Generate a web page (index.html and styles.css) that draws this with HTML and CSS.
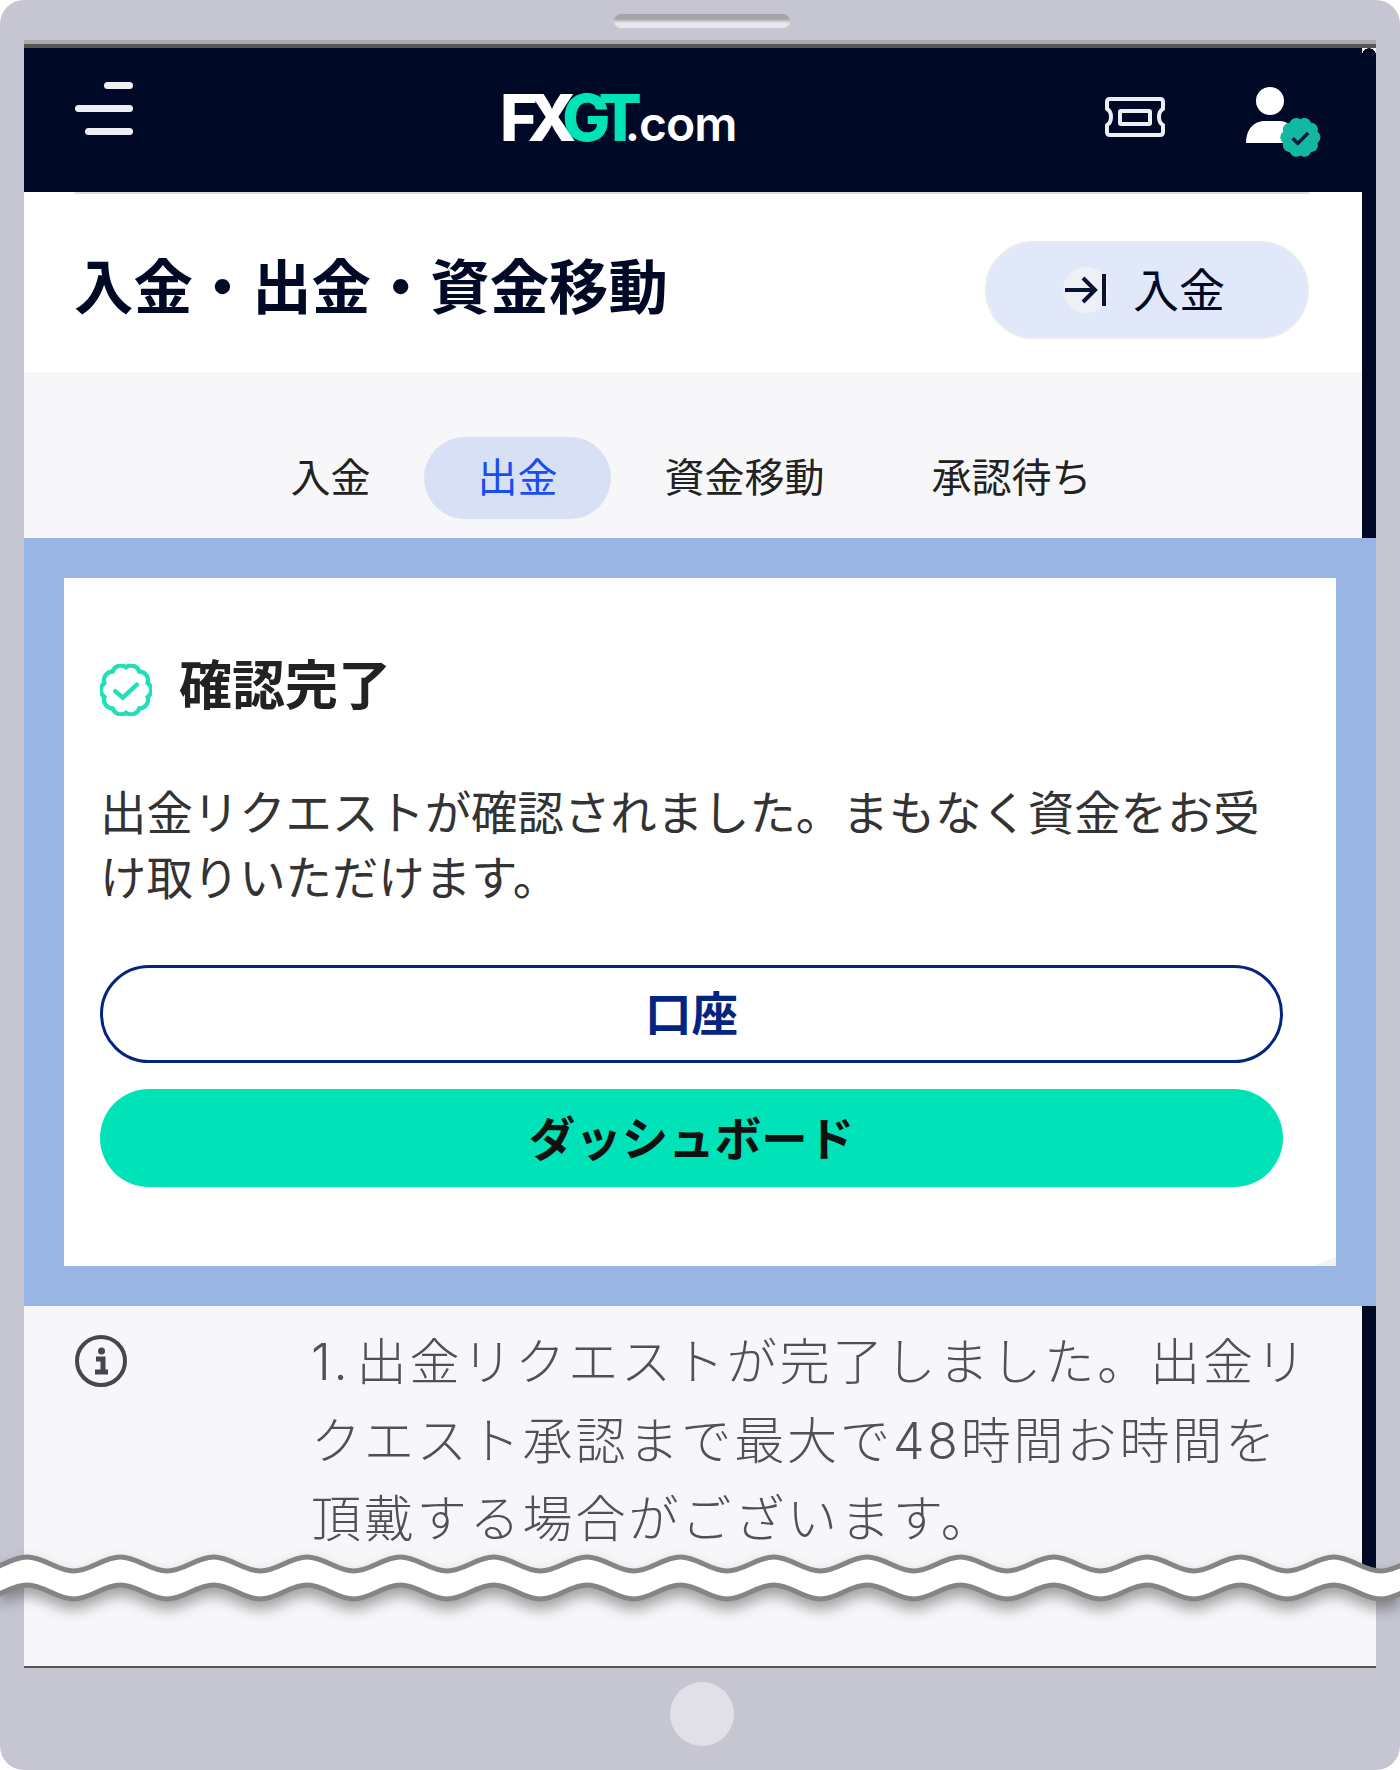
FILE: index.html
```html
<!DOCTYPE html>
<html lang="ja">
<head>
    <meta charset="utf-8">
    <title>入金・出金・資金移動</title>
    <link rel="stylesheet" href="styles.css">
</head>
<body>
    <div class="frame">
        <div class="speaker"></div>
        <div class="screen">
            <header class="topbar">
                <div class="burger"><span class="b1"></span><span class="b2"></span><span class="b3"></span></div>
                <div class="logo"><span class="logo-fx">FX</span><span class="logo-gt">GT</span><span class="logo-com">.com</span></div>
                <svg class="ticket" width="60" height="40" viewBox="0 0 60 40" fill="none" stroke="#eeeef5" stroke-width="4" stroke-linejoin="round">
                    <path d="M5 2H55Q58 2 58 5V12Q54 14 54 20T58 28V35Q58 38 55 38H5Q2 38 2 35V28Q6 26 6 20T2 12V5Q2 2 5 2Z"/>
                    <rect x="15" y="14" width="30" height="13" rx="1"/>
                </svg>
                <svg class="user" width="84" height="82" viewBox="0 0 84 82">
                    <circle cx="25" cy="15" r="14" fill="#fff"/>
                    <path d="M1 57C1 42 10 35 20 35H34C44 35 50 42 50 57Z" fill="#fff"/>
                    <g transform="translate(33 29) scale(.86)" fill="#13b8a4">
                        <path d="M45.97 19.51A8 8 0 0 1 45.97 32.49A8 8 0 0 1 38.34 42.99A8 8 0 0 1 26 47A8 8 0 0 1 13.66 42.99A8 8 0 0 1 6.03 32.49A8 8 0 0 1 6.03 19.51A8 8 0 0 1 13.66 9.01A8 8 0 0 1 26 5A8 8 0 0 1 38.34 9.01A8 8 0 0 1 45.97 19.51Z"/>
                        <path d="M17 27L23 33L35 21" fill="none" stroke="#0b1a30" stroke-width="4"/>
                    </g>
                </svg>
            </header>
            <div class="title-row">
                <h1 class="page-title">入金・出金・資金移動</h1>
                <a class="deposit-btn">
                    <svg width="62" height="46" viewBox="0 0 62 46" fill="none" stroke="#0a1430" stroke-width="4">
                        <circle cx="23" cy="23" r="23" fill="#eef0f6" stroke="none"/>
                        <path d="M2 23H31M20 11L32 23L20 35"/>
                        <path d="M41 7V39"/>
                    </svg>
                    <span>入金</span>
                </a>
            </div>
            <nav class="tabs">
                <a class="tab">入金</a>
                <a class="tab active">出金</a>
                <a class="tab">資金移動</a>
                <a class="tab">承認待ち</a>
            </nav>
            <div class="band">
                <section class="card">
                    <div class="card-head">
                        <svg width="52" height="52" viewBox="2 2 48 48" fill="none" stroke="#1fe0b8" stroke-width="4">
                            <path d="M45.97 19.51A8 8 0 0 1 45.97 32.49A8 8 0 0 1 38.34 42.99A8 8 0 0 1 26 47A8 8 0 0 1 13.66 42.99A8 8 0 0 1 6.03 32.49A8 8 0 0 1 6.03 19.51A8 8 0 0 1 13.66 9.01A8 8 0 0 1 26 5A8 8 0 0 1 38.34 9.01A8 8 0 0 1 45.97 19.51Z"/>
                            <path d="M16 27L23 33L36 21" stroke-linecap="round"/>
                        </svg>
                        <h2>確認完了</h2>
                    </div>
                    <p class="card-text">出金リクエストが確認されました。まもなく資金をお受け取りいただけます。</p>
                    <a class="btn btn-outline">口座</a>
                    <a class="btn btn-green">ダッシュボード</a>
                </section>
            </div>
            <div class="info">
                <svg width="52" height="52" viewBox="0 0 52 52" fill="none" stroke="#444650" stroke-width="4">
                    <circle cx="26" cy="26" r="24"/>
                    <circle cx="26.500" cy="16" r="3.500" fill="#444650" stroke="none"/>
                    <path d="M21 24H28V37M20 37H33" stroke-width="5"/>
                </svg>
                <p class="info-text">1. 出金リクエストが完了しました。出金リクエスト承認まで最大で48時間お時間を頂戴する場合がございます。</p>
            </div>
            <div class="tail"></div>
        </div>
        <div class="home"></div>
        <svg class="wave" width="1400" height="80" viewBox="0 0 1400 80">
            <path fill="#fff" stroke="#858585" stroke-width="5" d="M-66.33 12c17 0 29.67 14 46.67 14s29.67 -14 46.67 -14s29.67 14 46.67 14s29.67 -14 46.67 -14s29.67 14 46.67 14s29.67 -14 46.67 -14s29.67 14 46.67 14s29.67 -14 46.67 -14s29.67 14 46.67 14s29.67 -14 46.67 -14s29.67 14 46.67 14s29.67 -14 46.67 -14s29.67 14 46.67 14s29.67 -14 46.67 -14s29.67 14 46.67 14s29.67 -14 46.67 -14s29.67 14 46.67 14s29.67 -14 46.67 -14s29.67 14 46.67 14s29.67 -14 46.67 -14s29.67 14 46.67 14s29.67 -14 46.67 -14s29.67 14 46.67 14s29.67 -14 46.67 -14s29.67 14 46.67 14s29.67 -14 46.67 -14s29.67 14 46.67 14s29.67 -14 46.67 -14s29.67 14 46.67 14s29.67 -14 46.67 -14s29.67 14 46.67 14s29.67 -14 46.67 -14s29.67 14 46.67 14V54c-17 0 -29.67 -14 -46.67 -14s-29.67 14 -46.67 14s-29.67 -14 -46.67 -14s-29.67 14 -46.67 14s-29.67 -14 -46.67 -14s-29.67 14 -46.67 14s-29.67 -14 -46.67 -14s-29.67 14 -46.67 14s-29.67 -14 -46.67 -14s-29.67 14 -46.67 14s-29.67 -14 -46.67 -14s-29.67 14 -46.67 14s-29.67 -14 -46.67 -14s-29.67 14 -46.67 14s-29.67 -14 -46.67 -14s-29.67 14 -46.67 14s-29.67 -14 -46.67 -14s-29.67 14 -46.67 14s-29.67 -14 -46.67 -14s-29.67 14 -46.67 14s-29.67 -14 -46.67 -14s-29.67 14 -46.67 14s-29.67 -14 -46.67 -14s-29.67 14 -46.67 14s-29.67 -14 -46.67 -14s-29.67 14 -46.67 14s-29.67 -14 -46.67 -14s-29.67 14 -46.67 14s-29.67 -14 -46.67 -14s-29.67 14 -46.67 14s-29.67 -14 -46.67 -14s-29.67 14 -46.67 14s-29.67 -14 -46.67 -14Z"/>
        </svg>
    </div>
</body>
</html>
```

FILE: styles.css
```css
* {
    box-sizing: border-box;
}
body {
    margin: 0;
    background: #fff;
    font-family: "Noto Sans CJK JP", sans-serif;
}
.frame {
    position: relative;
    width: 1400px;
    height: 1770px;
    background: #c6c6d2;
    border-radius: 24px;
    padding: 14px 24px 0;
    overflow: hidden;
}
.speaker {
    width: 176px;
    height: 14px;
    margin: 0 0 12px 590px;
    border-radius: 7px;
    background: linear-gradient(#a5a5aa 0 5px, #e8e8ec 9px);
}
.screen {
    display: flex;
    flex-direction: column;
    height: 1628px;
    background: #000a26;
    border-top: 4px solid #aaa;
    border-bottom: 2px solid #555;
}
.topbar {
    position: relative;
    display: flex;
    align-items: flex-start;
    height: 148px;
    border-top: 4px solid #555;
    padding-left: 51px;
}
.topbar::after {
    content: "";
    position: absolute;
    top: 0;
    right: 0;
    width: 14px;
    height: 5px;
    background: radial-gradient(ellipse at 50% 130%, #000a26 65%, #f4f4f8 70%);
}
.burger {
    display: flex;
    flex-direction: column;
    align-items: flex-end;
    gap: 16px;
    width: 58px;
    margin-top: 34px;
}
.burger span {
    display: block;
    height: 7px;
    border-radius: 4px;
    background: #eeeef5;
}
.b1 { width: 29px; }
.b2 { width: 58px; }
.b3 { width: 48px; }
.logo {
    margin: 28px 0 0 367px;
    width: 240px;
    font-family: Inter, sans-serif;
    font-weight: 800;
    font-size: 64px;
    line-height: 84px;
    letter-spacing: -10px;
    color: #fff;
    white-space: nowrap;
}
.logo-gt {
    color: #00e3b8;
}
.logo-com {
    margin-left: -7px;
    font-size: 48px;
    font-weight: 600;
    letter-spacing: -1px;
}
.ticket {
    margin: 49px 0 0 365px;
}
.user {
    margin: 38px 0 0 80px;
}
.title-row {
    position: relative;
    display: flex;
    justify-content: space-between;
    align-items: flex-start;
    height: 180px;
    margin-right: 14px;
    padding: 49px 53px 0 51px;
    background: #fff;
}
.title-row::before {
    content: "";
    position: absolute;
    top: 0;
    left: 51px;
    right: 53px;
    height: 2px;
    background: #ddd;
}
.page-title {
    margin: -3px 0 0 -1px;
    font-size: 59.400px;
    line-height: 90px;
    font-weight: 700;
    color: #000a26;
}
.deposit-btn {
    display: flex;
    align-items: center;
    justify-content: center;
    gap: 8px;
    width: 324px;
    height: 98px;
    padding-right: 6px;
    background: #e0e8fa;
    border: 2px solid #eaeaef;
    border-radius: 49px;
    font-size: 46px;
    line-height: 86px;
    color: #000a26;
}
.deposit-btn span {
    margin-bottom: 6px;
}
.tabs {
    display: flex;
    justify-content: center;
    height: 166px;
    margin-right: 14px;
    padding: 65px 4px 0 0;
    background: #f7f7fa;
}
.tab {
    height: 82px;
    padding: 0 53.500px;
    font-size: 40px;
    line-height: 76px;
    border-radius: 41px;
    color: #222;
}
.tab.active {
    background: #d7e0f4;
    color: #1a4cf0;
}
.band {
    padding: 40px;
    background: #99b5e4;
}
.card {
    position: relative;
    height: 688px;
    padding: 86px 53px 0 36px;
    background: #fff;
}
.card::after {
    content: "";
    position: absolute;
    right: 0;
    bottom: 0;
    width: 24px;
    height: 9px;
    background: linear-gradient(to bottom right, transparent 50%, #f4f4f6 50%);
}
.card-head {
    display: flex;
    align-items: center;
    gap: 27px;
    height: 52px;
}
.card-head h2 {
    margin: -17px 0 0;
    font-size: 53px;
    line-height: 52px;
    font-weight: 700;
    color: #222;
}
.card-text {
    margin: 61px 0 58px;
    font-size: 46.400px;
    line-height: 65px;
    color: #333;
}
.btn {
    display: block;
    height: 98px;
    border-radius: 49px;
    font-size: 46.500px;
    font-weight: 700;
    line-height: 86px;
    text-align: center;
}
.btn-outline {
    border: 3px solid #03247f;
    color: #03247f;
}
.btn-green {
    margin-top: 26px;
    background: #00e3b8;
    color: #111;
    line-height: 94px;
}
.info {
    display: flex;
    align-items: flex-start;
    height: 264px;
    margin-right: 14px;
    padding: 29px 50px 0 51px;
    background: #f7f7fa;
}
.info-text {
    flex: 1;
    margin: -12px 0 0 184px;
    font-family: Inter, "Noto Sans CJK JP", sans-serif;
    font-size: 50px;
    font-weight: 300;
    line-height: 78.500px;
    letter-spacing: 2.900px;
    word-spacing: -11px;
    color: #505058;
}
.tail {
    flex: 1;
    background: #f7f7fa;
}
.home {
    width: 64px;
    height: 64px;
    margin: 14px 0 0 646px;
    border-radius: 50%;
    background: #e0e0e6;
}
.wave {
    position: absolute;
    left: 0;
    top: 1545px;
    filter: drop-shadow(0 8px 7px rgba(0, 0, 0, .35));
}
```
